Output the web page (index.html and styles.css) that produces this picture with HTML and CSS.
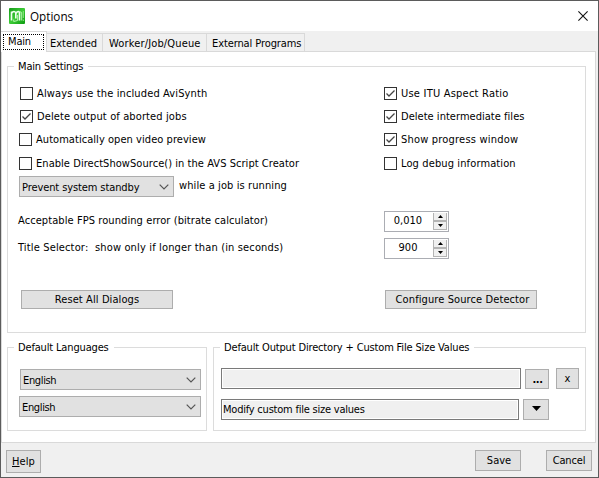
FILE: index.html
```html
<!DOCTYPE html>
<html lang="en">
<head>
<meta charset="utf-8">
<title>Options</title>
<link rel="stylesheet" href="styles.css">
</head>
<body>
<div class="window">
  <header class="titlebar">
    <svg class="app-icon" width="16" height="16" viewBox="0 0 16 16">
      <defs><linearGradient id="g" x1="0" y1="0" x2="1" y2="1"><stop offset="0" stop-color="#159a19"/><stop offset=".5" stop-color="#3ccb36"/><stop offset="1" stop-color="#0b9a10"/></linearGradient></defs>
      <rect width="16" height="16" rx="1" fill="url(#g)"/>
      <path d="M2.5 12.5V3.5M2.5 5.5Q3.5 3.5 5 3.5T6.8 5.5V10.5M6.8 5.5Q8 3.5 9.3 3.5T10.5 5.5V12.5" fill="none" stroke="#effff0" stroke-width="1.6"/>
      <path d="M10.5 3.5L12.7 4.5V12.5M4.7 11.5V13.5L8.6 12.5V7" fill="none" stroke="#b6f5ae" stroke-width="1"/>
      <path d="M14.3 3V10M14.3 11.5V13" stroke="#8be883"/>
    </svg>
    <span class="caption">Options</span>
    <svg class="close" width="10" height="10" viewBox="0 0 10 10"><path d="M.4.4l9.2 9.2M9.6.4L.4 9.6" stroke="#111" stroke-width="1.1"/></svg>
  </header>

  <nav class="tabs">
    <div class="tab active"><span class="focus tight">Main</span></div>
    <div class="tab extended">Extended</div>
    <div class="tab worker wide">Worker/Job/Queue</div>
    <div class="tab external snug">External Programs</div>
  </nav>

  <main class="page">
    <fieldset class="settings">
      <legend class="tight">Main Settings</legend>
      <div class="options">
        <div class="column">
          <label class="check wide"><svg class="box"></svg>Always use the included AviSynth</label>
          <label class="check wide"><svg class="box" viewBox="0 0 11 11"><path d="M1.5 5.5L4 8L9.5 2.5"/></svg>Delete output of aborted jobs</label>
          <label class="check shifted"><svg class="box"></svg>Automatically open video preview</label>
          <label class="check shifted last"><svg class="box"></svg>Enable DirectShowSource() in the AVS Script Creator</label>
        </div>
        <div class="column">
          <label class="check widest"><svg class="box" viewBox="0 0 11 11"><path d="M1.5 5.5L4 8L9.5 2.5"/></svg>Use ITU Aspect Ratio</label>
          <label class="check plain"><svg class="box" viewBox="0 0 11 11"><path d="M1.5 5.5L4 8L9.5 2.5"/></svg>Delete intermediate files</label>
          <label class="check wider"><svg class="box" viewBox="0 0 11 11"><path d="M1.5 5.5L4 8L9.5 2.5"/></svg>Show progress window</label>
          <label class="check wide last"><svg class="box"></svg>Log debug information</label>
        </div>
      </div>
      <div class="standby">
        <div class="combo snug">Prevent system standby<svg class="chevron" viewBox="0 0 10 6"><path d="M.7.7L5 5L9.3.7"/></svg></div>
        <span class="while">while a job is running</span>
      </div>
      <div class="numeric">
        <span class="name">Acceptable FPS rounding error (bitrate calculator)</span>
        <div class="spinner"><span class="value">0,010</span><div class="arrows"><i><svg viewBox="0 0 5 3"><path d="M0 3L2.5 0L5 3z"/></svg></i><i><svg viewBox="0 0 5 3"><path d="M0 0L2.5 3L5 0z"/></svg></i></div></div>
      </div>
      <div class="numeric">
        <span class="name wide">Title Selector:&nbsp; show only if longer than (in seconds)</span>
        <div class="spinner"><span class="value">900</span><div class="arrows"><i><svg viewBox="0 0 5 3"><path d="M0 3L2.5 0L5 3z"/></svg></i><i><svg viewBox="0 0 5 3"><path d="M0 0L2.5 3L5 0z"/></svg></i></div></div>
      </div>
      <div class="actions">
        <div class="button wide">Reset All Dialogs</div>
        <div class="button configure">Configure Source Detector</div>
      </div>
    </fieldset>

    <div class="lower">
      <fieldset class="languages">
        <legend class="tight">Default Languages</legend>
        <div class="combo first">English<svg class="chevron" viewBox="0 0 10 6"><path d="M.7.7L5 5L9.3.7"/></svg></div>
        <div class="combo">English<svg class="chevron" viewBox="0 0 10 6"><path d="M.7.7L5 5L9.3.7"/></svg></div>
      </fieldset>
      <fieldset class="output">
        <legend class="tight">Default Output Directory + Custom File Size Values</legend>
        <div class="row">
          <div class="field directory"></div>
          <div class="button browse">...</div>
          <div class="button clear">x</div>
        </div>
        <div class="row">
          <div class="field sizes">Modify custom file size values</div>
          <div class="button drop"><svg width="9" height="5" viewBox="0 0 9 5"><path d="M0 0H9L4.5 5z"/></svg></div>
        </div>
      </fieldset>
    </div>
  </main>

  <footer class="footer">
    <div class="button help"><u>H</u>elp</div>
    <div class="button save">Save</div>
    <div class="button cancel">Cancel</div>
  </footer>
</div>
</body>
</html>
```
FILE: styles.css
```css
* { box-sizing: border-box; }
body { margin: 0; font: 11px/13px "DejaVu Sans Condensed", "Liberation Sans", sans-serif; color: #000; }
.window { width: 599px; height: 478px; border: 1px solid #5b5b5b; background: #f0f0f0; overflow: hidden; }
svg { display: block; flex: none; }

.snug { letter-spacing: -.1px; }
.tight { letter-spacing: -.16px; }
.wide { letter-spacing: .15px; }
.check.wide { letter-spacing: .12px; }
.check.wider { letter-spacing: .2px; }
.check.widest { letter-spacing: .22px; }

.titlebar { display: flex; align-items: center; height: 30px; padding: 0 10px 0 8px; background: #fff; }
.caption { flex: 1; margin-left: 5px; padding-bottom: 1px; font: 11.7px/16px "Open Sans", sans-serif; }

.tabs { display: flex; align-items: flex-end; height: 20px; }
.tab { height: 18px; padding: 3px 0 0 3px; border: solid #d9d9d9; border-width: 1px 1px 0 0; white-space: nowrap; }
.tab.active { width: 46px; height: 21px; margin-bottom: -1px; padding: 2px 0 0 2px; background: #fff; z-index: 1; }
.focus { display: block; width: 41px; height: 16px; padding-left: 4px; border: 1px dotted #000; line-height: 13px; }
.extended { width: 56px; }
.worker { width: 104px; padding-left: 6px; }
.external { width: 98px; padding-left: 5px; }

.page { width: 595px; height: 392px; padding: 8px 0 0 5px; border: 1px solid #d9d9d9; background: #fff; }
fieldset { margin: 0; padding: 0; border: 1px solid #dcdcdc; min-width: 0; }
legend { margin-left: 6px; padding: 0 5px 0 4px; height: 13px; white-space: nowrap; }
.settings { width: 579px; height: 273px; }
.options { display: grid; grid-template-columns: 364px 1fr; padding: 14px 0 0 12px; }
.column { display: flex; flex-direction: column; }
.check { display: flex; gap: 4px; height: 13px; margin-bottom: 10px; letter-spacing: .05px; white-space: nowrap; }
.check.shifted { margin-left: -1px; }
.check.plain { letter-spacing: .03px; }
.column .check:nth-child(3) { margin-bottom: 11px; }
.column .check.last { margin-bottom: 0; }
.box { width: 13px; height: 13px; border: 1px solid #333; background: #fff; }
.box path { fill: none; stroke: #444; stroke-width: 1.3; }

.combo { display: flex; justify-content: space-between; height: 21px; padding: 4px 4px 0 2px; border: 1px solid #adadad; background: #e1e1e1; white-space: nowrap; }
.chevron { width: 10px; height: 6px; margin-top: 3px; }
.chevron path { fill: none; stroke: #555; stroke-width: 1.2; }
.standby { display: flex; padding: 6px 0 0 11px; height: 27px; }
.standby .combo { width: 155px; }
.while { margin: 3px 0 0 5px; letter-spacing: .1px; }

.numeric { display: flex; height: 21px; margin: 14px 0 0 10px; }
.numeric + .numeric { margin-top: 6px; }
.name { width: 366px; padding-top: 3px; letter-spacing: .08px; white-space: nowrap; }
.name.wide { letter-spacing: .15px; }
.spinner { display: flex; width: 65px; height: 21px; border: 1px solid #abadb3; }
.value { width: 48px; padding: 2px 2px 0 0; text-align: center; }
.arrows { width: 14px; margin-top: 1px; height: 17px; display: flex; flex-direction: column; }
.arrows i { flex: 1; display: flex; align-items: center; justify-content: center; border: solid #b4b4b4; border-width: 0 1px 1px; background: #f0f0f0; }
.arrows i + i { border-top-width: 1px; }
.arrows svg { width: 5px; height: 3px; }

.button { display: flex; align-items: flex-start; justify-content: center; height: 21px; padding-top: 3px; border: 1px solid #adadad; background: #e1e1e1; white-space: nowrap; letter-spacing: .1px; }
.actions { display: flex; justify-content: space-between; margin: 31px 48px 0 13px; }
.actions .button { width: 152px; height: 19px; padding-top: 2px; }
.actions .configure { padding-left: 3px; }

.lower { display: flex; gap: 6px; margin-top: 8px; }
.languages { width: 200px; height: 90px; }
.languages .combo { width: 182px; margin: 6px 0 0 11px; letter-spacing: -.35px; }
.languages .combo.first { width: 181px; margin: 15px 0 0 12px; }
.output { width: 373px; height: 90px; }
.row { display: flex; margin: 10px 0 0 7px; }
legend + .row { margin-top: 14px; }
.field { height: 21px; border: 1px solid #7a7a7a; padding: 3px 0 0 1px; background: #f0f0f0; box-shadow: inset 0 0 0 1px #fff; letter-spacing: -.22px; }
.directory { width: 300px; }
.sizes { width: 298px; }
.browse { width: 24px; height: 20px; margin: 1px 0 0 4px; padding-left: 1px; font-weight: bold; letter-spacing: -.5px; }
.clear { width: 23px; margin-left: 7px; }
.drop { width: 26px; margin-left: 4px; padding-top: 6px; }

.footer { display: flex; padding: 7px 0 0 5px; }
.help { width: 35px; height: 23px; padding-top: 4px; }
.save { width: 46px; margin-left: 434px; padding-left: 2px; letter-spacing: 0; }
.cancel { width: 46px; margin-left: 25px; letter-spacing: -.15px; }
```
